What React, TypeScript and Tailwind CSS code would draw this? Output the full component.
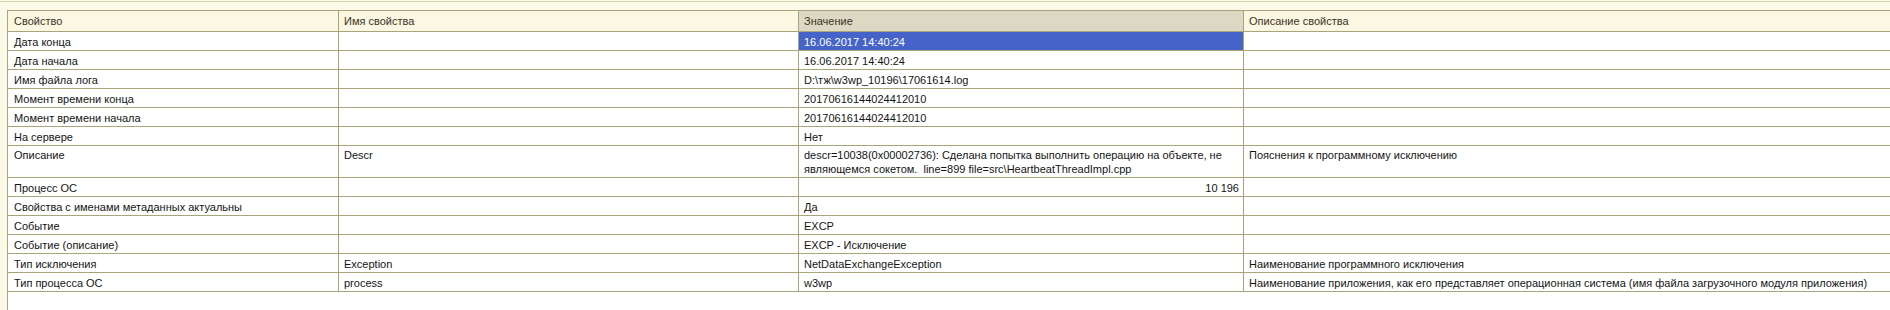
type Row = {
  prop: string;
  name?: string;
  value?: string[];
  desc?: string;
  tall?: boolean;
  right?: boolean;
  selected?: boolean;
};

const rows: Row[] = [
  { prop: "Дата конца", value: ["16.06.2017 14:40:24"], selected: true },
  { prop: "Дата начала", value: ["16.06.2017 14:40:24"] },
  { prop: "Имя файла лога", value: ["D:\\тж\\w3wp_10196\\17061614.log"] },
  { prop: "Момент времени конца", value: ["20170616144024412010"] },
  { prop: "Момент времени начала", value: ["20170616144024412010"] },
  { prop: "На сервере", value: ["Нет"] },
  {
    prop: "Описание",
    name: "Descr",
    value: [
      "descr=10038(0x00002736): Сделана попытка выполнить операцию на объекте, не",
      "являющемся сокетом.  line=899 file=src\\HeartbeatThreadImpl.cpp",
    ],
    desc: "Пояснения к программному исключению",
    tall: true,
  },
  { prop: "Процесс ОС", value: ["10 196"], right: true },
  { prop: "Свойства с именами метаданных актуальны", value: ["Да"] },
  { prop: "Событие", value: ["EXCP"] },
  { prop: "Событие (описание)", value: ["EXCP - Исключение"] },
  {
    prop: "Тип исключения",
    name: "Exception",
    value: ["NetDataExchangeException"],
    desc: "Наименование программного исключения",
  },
  {
    prop: "Тип процесса ОС",
    name: "process",
    value: ["w3wp"],
    desc: "Наименование приложения, как его представляет операционная система (имя файла загрузочного модуля приложения)",
  },
];

function App() {
  return (
    <div className="w-full h-[310px] overflow-hidden bg-[#fbf9e7] flex flex-col font-['Liberation_Sans',Arial,sans-serif] text-[11px] leading-[14px] text-[#141414]">
      <div className="h-[1px] mt-[1px] bg-[#d6d2b4]" />
      <div className="mt-[8px] ml-[7px] flex-1 bg-white border-l border-[#aaa47c] flex flex-col">
        {/* header */}
        <div className="flex h-[22px] border-y border-[#aaa47c] text-[#3a3322]">
          <div className="w-[331px] shrink-0 pl-[6px] pt-[3px] bg-[#faf7e2] border-r border-[#aaa47c]">
            Свойство
          </div>
          <div className="w-[460px] shrink-0 pl-[5px] pt-[3px] bg-[#faf7e2] border-r border-[#aaa47c]">
            Имя свойства
          </div>
          <div className="w-[445px] shrink-0 pl-[5px] pt-[3px] bg-[#dcd8c4] border-r border-[#aaa47c]">
            Значение
          </div>
          <div className="flex-1 pl-[5px] pt-[3px] bg-[#faf7e2]">Описание свойства</div>
        </div>
        {rows.map((r) => (
          <div
            key={r.prop}
            className={`flex border-b border-[#aaa47c] ${r.tall ? "h-[32px]" : "h-[19px]"}`}
          >
            <div className={`w-[331px] shrink-0 pl-[6px] border-r border-[#aaa47c] ${r.tall ? "pt-[2px]" : "pt-[3px]"}`}>
              {r.prop}
            </div>
            <div className={`w-[460px] shrink-0 pl-[5px] border-r border-[#aaa47c] ${r.tall ? "pt-[2px]" : "pt-[3px]"}`}>
              {r.name}
            </div>
            <div
              className={`w-[445px] shrink-0 px-[5px] border-r border-[#aaa47c] whitespace-pre ${r.tall ? "pt-[2px]" : "pt-[3px]"} ${r.right ? "text-right pr-[4px]" : ""} ${r.selected ? "bg-[#4563c8] text-white" : ""}`}
            >
              {r.value?.map((line, i) => (
                <div key={i}>{line}</div>
              ))}
            </div>
            <div className={`flex-1 pl-[5px] whitespace-nowrap ${r.tall ? "pt-[2px]" : "pt-[3px]"}`}>
              {r.desc}
            </div>
          </div>
        ))}
      </div>
    </div>
  );
}

export default App;
